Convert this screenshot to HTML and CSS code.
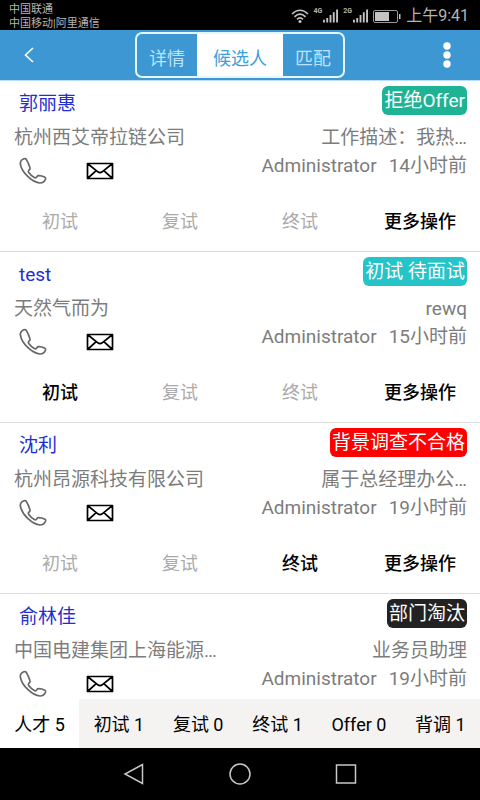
FILE: index.html
```html
<!DOCTYPE html>
<html lang="zh-CN">
<head>
<meta charset="utf-8">
<meta name="viewport" content="width=device-width, initial-scale=1">
<title>候选人</title>
<link rel="stylesheet" href="styles.css">
</head>
<body>
<svg class="defs" aria-hidden="true">
  <symbol id="phone" viewBox="0 0 28 28">
    <path d="M4.800 1.800C2.800 2.600 1.300 4.500 1.300 6.600c.6 4.600 3.700 9.300 7.700 13.100 3.600 3.400 7.800 6 12 6.300 2.400 0 4.700-1.700 5.600-4 .2-.8 0-1.400-.7-1.800-2-1-4.200-1.500-6.300-1.500-.8 0-1.300.3-1.700.9l-.6.9c-.5.5-1.200.5-1.900.1-2.300-1.400-4.300-3.200-5.800-5.400-.4-.7-.3-1.300.2-1.900l.9-.9c.5-.6.5-1.200.2-1.900-.9-2.800-2-5.500-3.600-8.100-.5-.8-1.500-1-2.500-.6z" fill="none" stroke="#666" stroke-width="1.700" stroke-linejoin="round"/>
  </symbol>
  <symbol id="mail" viewBox="0 0 28 18">
    <path d="M1.500 1.500h25v15h-25zM1.500 1.500l10.300 8.300c1.500 1.100 2.900 1.100 4.400 0L26.500 1.500M1.500 16.500l8.700-7.800M26.500 16.500l-8.700-7.800" fill="none" stroke="#000" stroke-width="1.700" stroke-linejoin="round"/>
  </symbol>
  <symbol id="signal" viewBox="0 0 16 14">
    <path d="M0 11h2v3H0zM3.500 9h2v5h-2zM7 6h2v8H7zM10.500 3h2v11h-2zM14 0h2v14h-2z" fill="#c4c4c4"/>
  </symbol>
</svg>

<div class="status">
  <div class="carriers"><span>中国联通</span><span>中国移动|阿里通信</span></div>
  <div class="indicators">
    <svg class="wifi" viewBox="0 0 18 14" aria-hidden="true"><g fill="none" stroke="#c4c4c4" stroke-width="1.600"><path d="M1 5Q9-2.500 17 5"/><path d="M3.500 7.800Q9 2.500 14.500 7.800"/><path d="M6 10.400Q9 7.500 12 10.400"/></g><circle cx="9" cy="12.400" r="1.500" fill="#c4c4c4"/></svg>
    <span class="net">4G</span><svg class="signal" aria-hidden="true"><use href="#signal"/></svg>
    <span class="net">2G</span><svg class="signal" aria-hidden="true"><use href="#signal"/></svg>
    <svg class="battery" viewBox="0 0 28 13" aria-hidden="true"><rect x=".5" y=".5" width="24" height="12" rx="1.500" fill="none" stroke="#999"/><path d="M2 2h14v9H2z" fill="#c4c4c4"/><path d="M26 4h1.500v5H26z" fill="#c4c4c4"/></svg>
    <time>上午9:41</time>
  </div>
</div>

<header class="topbar">
  <button class="back" aria-label="返回"><svg viewBox="0 0 10 16" aria-hidden="true"><path d="M9 1L1.500 8 9 15" fill="none" stroke="#fff" stroke-width="1.600"/></svg></button>
  <nav class="segments">
    <button>详情</button><button class="selected">候选人</button><button>匹配</button>
  </nav>
  <button class="menu" aria-label="更多"><svg viewBox="0 0 8 26" aria-hidden="true"><g fill="#fff"><circle cx="4" cy="4" r="3.700"/><circle cx="4" cy="13" r="3.700"/><circle cx="4" cy="22" r="3.700"/></g></svg></button>
</header>

<main class="list">
  <article class="card">
    <div class="info">
      <div class="person">
        <a class="name" href="#">郭丽惠</a>
        <span class="company">杭州西艾帝拉链公司</span>
        <div class="contact"><button aria-label="电话"><svg class="phone"><use href="#phone"/></svg></button><button aria-label="邮件"><svg class="mail"><use href="#mail"/></svg></button></div>
      </div>
      <div class="detail">
        <span class="badge offer">拒绝Offer</span>
        <span class="job">工作描述：我热…</span>
        <div class="meta"><span>Administrator</span><span>14小时前</span></div>
      </div>
    </div>
    <div class="actions"><button disabled>初试</button><button disabled>复试</button><button disabled>终试</button><button>更多操作</button></div>
  </article>

  <article class="card">
    <div class="info">
      <div class="person">
        <a class="name" href="#">test</a>
        <span class="company">天然气而为</span>
        <div class="contact"><button aria-label="电话"><svg class="phone"><use href="#phone"/></svg></button><button aria-label="邮件"><svg class="mail"><use href="#mail"/></svg></button></div>
      </div>
      <div class="detail">
        <span class="badge pending">初试 待面试</span>
        <span class="job">rewq</span>
        <div class="meta"><span>Administrator</span><span>15小时前</span></div>
      </div>
    </div>
    <div class="actions"><button>初试</button><button disabled>复试</button><button disabled>终试</button><button>更多操作</button></div>
  </article>

  <article class="card">
    <div class="info">
      <div class="person">
        <a class="name" href="#">沈利</a>
        <span class="company">杭州昂源科技有限公司</span>
        <div class="contact"><button aria-label="电话"><svg class="phone"><use href="#phone"/></svg></button><button aria-label="邮件"><svg class="mail"><use href="#mail"/></svg></button></div>
      </div>
      <div class="detail">
        <span class="badge failed">背景调查不合格</span>
        <span class="job">属于总经理办公…</span>
        <div class="meta"><span>Administrator</span><span>19小时前</span></div>
      </div>
    </div>
    <div class="actions"><button disabled>初试</button><button disabled>复试</button><button>终试</button><button>更多操作</button></div>
  </article>

  <article class="card">
    <div class="info">
      <div class="person">
        <a class="name" href="#">俞林佳</a>
        <span class="company">中国电建集团上海能源…</span>
        <div class="contact"><button aria-label="电话"><svg class="phone"><use href="#phone"/></svg></button><button aria-label="邮件"><svg class="mail"><use href="#mail"/></svg></button></div>
      </div>
      <div class="detail">
        <span class="badge rejected">部门淘汰</span>
        <span class="job">业务员助理</span>
        <div class="meta"><span>Administrator</span><span>19小时前</span></div>
      </div>
    </div>
  </article>
</main>

<nav class="stages">
  <button class="selected">人才 5</button><button>初试 1</button><button>复试 0</button><button>终试 1</button><button>Offer 0</button><button>背调 1</button>
</nav>

<footer class="system">
  <button aria-label="后退"><svg viewBox="0 0 22 22"><path d="M19.500 1.500v19L2 11z"/></svg></button>
  <button aria-label="主页"><svg viewBox="0 0 22 22"><circle cx="11" cy="11" r="10"/></svg></button>
  <button aria-label="最近任务"><svg viewBox="0 0 22 22"><rect x="1.500" y="2" width="19" height="18"/></svg></button>
</footer>
</body>
</html>
```
FILE: styles.css
```css
* {
  box-sizing: border-box;
}

body {
  margin: 0;
  height: 100vh;
  display: flex;
  flex-direction: column;
  background: #fff;
  color: #7c7c7c;
  font: 18px/28px Roboto, "Noto Sans CJK SC", sans-serif;
  white-space: nowrap;
}

button {
  margin: 0;
  padding: 0;
  border: 0;
  background: none;
  color: inherit;
  font: inherit;
}

svg {
  display: block;
}

.defs {
  display: none;
}

.status {
  flex: none;
  height: 30px;
  padding: 2px 11px 0 9px;
  display: flex;
  align-items: center;
  justify-content: space-between;
  background: #000;
  color: #b4b4b4;
}

.carriers {
  padding-top: 2px;
  display: flex;
  flex-direction: column;
  font-size: 11px;
  line-height: 14px;
}

.indicators {
  display: flex;
  align-items: center;
  gap: 5px;
}

.indicators time {
  font-size: 16px;
}

.wifi {
  width: 18px;
  height: 14px;
}

.net {
  align-self: flex-start;
  margin-right: -4px;
  font-size: 7px;
  line-height: 18px;
  font-weight: 700;
}

.signal {
  width: 15px;
  height: 14px;
}

.battery {
  width: 28px;
  height: 13px;
}

.topbar {
  flex: none;
  height: 51px;
  padding: 0 16px;
  display: grid;
  grid-template-columns: 1fr auto 1fr;
  align-items: center;
  background: #3d97d3;
  border-bottom: 1px solid #b9defa;
}

.back {
  justify-self: start;
  padding: 8px;
}

.back svg {
  width: 10px;
  height: 16px;
}

.menu {
  justify-self: end;
  padding: 4px 13px;
}

.menu svg {
  width: 8px;
  height: 26px;
}

.segments {
  display: flex;
  height: 46px;
  border: 2px solid #e4f6ff;
  border-radius: 7px;
  overflow: hidden;
  color: #b9e4fb;
}

.segments button {
  padding: 8px 12px 0;
}

.segments .selected {
  padding: 8px 16px 0;
  background: #fff;
  color: #3d9fd8;
}

.list {
  flex: 1;
  min-height: 0;
  overflow: hidden;
}

.card {
  border-bottom: 1px solid #dcdcdc;
}

.info {
  padding: 5px 13px 0 14px;
  display: flex;
  justify-content: space-between;
  font-size: 19px;
}

.person {
  padding-top: 1px;
  display: flex;
  flex-direction: column;
  line-height: 34px;
}

.name {
  padding-left: 5px;
  color: #1f2fd0;
  text-decoration: none;
}

.contact {
  height: 32px;
  padding-left: 5px;
  display: flex;
  align-items: center;
  gap: 39px;
}

.phone {
  width: 28px;
  height: 28px;
}

.mail {
  width: 28px;
  height: 18px;
}

.detail {
  display: flex;
  flex-direction: column;
  align-items: flex-end;
}

.badge {
  margin-bottom: 9px;
  padding: 0 2px;
  border-radius: 6px;
  color: #fff;
  line-height: 29px;
}

.offer {
  background: #1eb394;
}

.pending {
  background: #24c4c8;
}

.failed {
  background: #fe0000;
}

.rejected {
  background: #222;
}

.meta {
  display: flex;
  gap: 12px;
}

.actions {
  height: 64px;
  padding-top: 6px;
  display: grid;
  grid-template-columns: repeat(4, 1fr);
  color: #000;
  font-weight: 500;
}

.actions button:disabled {
  color: #aaa;
  font-weight: 400;
}

.stages {
  flex: none;
  height: 49px;
  display: flex;
  background: #f5f2f2;
  color: #000;
}

.stages button {
  flex: 1 1 auto;
  padding-top: 2px;
}

.stages .selected {
  background: #fff;
}

.system {
  flex: none;
  height: 52px;
  display: flex;
  align-items: center;
  justify-content: center;
  gap: 84px;
  background: #000;
}

.system svg {
  width: 22px;
  height: 22px;
  fill: none;
  stroke: #c8c8c8;
  stroke-width: 1.5;
}
```
